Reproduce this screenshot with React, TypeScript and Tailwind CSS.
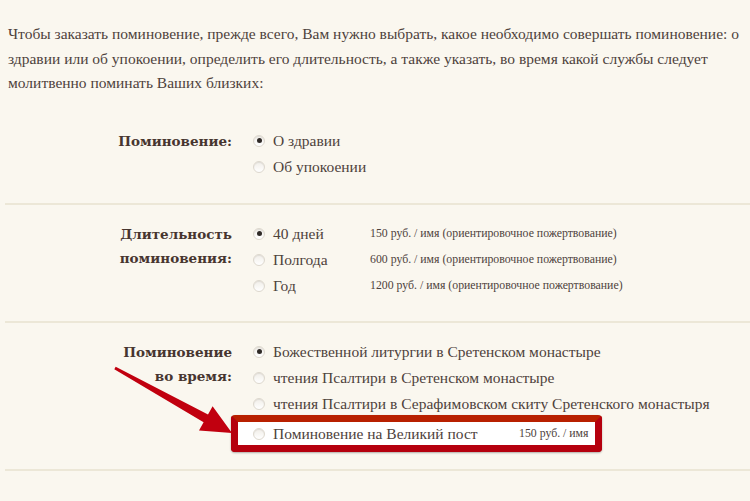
import React from "react";

const serif = "font-['Liberation_Serif','Times_New_Roman',serif]";
const labelFont = "font-['DejaVu_Serif','Liberation_Serif',serif]";

function Radio({ checked }: { checked?: boolean }) {
  return (
    <span className="flex h-[12px] w-[12px] shrink-0 items-center justify-center rounded-full border border-[#ddd8ce] bg-gradient-to-b from-[#f1eee8] to-white shadow-[inset_0_1px_1px_rgba(0,0,0,0.08)]">
      {checked && <span className="h-[5px] w-[5px] rounded-full bg-[#2f2a27]" />}
    </span>
  );
}

function Option({ label, checked, price, nameWidth }: { label: string; checked?: boolean; price?: string; nameWidth?: string }) {
  return (
    <div className="flex h-[26px] items-center">
      <div className={`flex items-center gap-[8px] ${nameWidth ?? ""}`}>
        <Radio checked={checked} />
        <span className="text-[15.5px] text-[#4e423c]">{label}</span>
      </div>
      {price && <span className="text-[11.8px] text-[#4e423c]">{price}</span>}
    </div>
  );
}

function Section({ label, children, top }: { label: React.ReactNode; children: React.ReactNode; top?: boolean }) {
  return (
    <div>
      {!top && <div className="ml-[5px] h-[2px] bg-[#ece7d7]" />}
      <div className={`grid grid-cols-[232px_1fr] gap-x-[21px] ${top ? "pt-[32px] pb-[23px]" : "pt-[16px] pb-[22px]"}`}>
        <div className={`pt-[1px] text-right text-[13.5px] font-bold leading-[24px] text-[#47352f] ${labelFont}`}>
          {label}
        </div>
        <div>{children}</div>
      </div>
    </div>
  );
}

export default function App() {
  return (
    <div className={`relative h-[501px] w-[750px] overflow-hidden bg-[#faf7ef] ${serif}`}>
      <p className="pl-2 pr-[2px] pt-[22px] text-[15.5px] leading-[24.5px] text-[#4e423c]">
        Чтобы заказать поминовение, прежде всего, Вам нужно выбрать, какое необходимо совершать поминовение: о
        здравии или об упокоении, определить его длительность, а также указать, во время какой службы следует
        молитвенно поминать Ваших близких:
      </p>

      <Section top label="Поминовение:">
        <Option checked label="О здравии" />
        <Option label="Об упокоении" />
      </Section>

      <Section
        label={
          <>
            Длительность
            <br />
            поминовения:
          </>
        }
      >
        <Option checked nameWidth="w-[117px]" label="40 дней" price="150 руб. / имя (ориентировочное пожертвование)" />
        <Option nameWidth="w-[117px]" label="Полгода" price="600 руб. / имя (ориентировочное пожертвование)" />
        <Option nameWidth="w-[117px]" label="Год" price="1200 руб. / имя (ориентировочное пожертвование)" />
      </Section>

      <Section
        label={
          <>
            Поминовение
            <br />
            во время:
          </>
        }
      >
        <Option checked label="Божественной литургии в Сретенском монастыре" />
        <Option label="чтения Псалтири в Сретенском монастыре" />
        <Option label="чтения Псалтири в Серафимовском скиту Сретенского монастыря" />
        <div className="relative mt-[4px]">
          <span className="absolute left-[-22px] top-[-6px] h-[37px] w-[371px] rounded-[4px] border-[7px] border-[#b5000e] border-t-[#b82000] bg-white shadow-[0_1px_2px_rgba(0,0,0,0.3)]" />
          <div className="relative flex h-[26px] items-center">
            <div className="flex w-[266px] items-center gap-[8px]">
              <Radio />
              <span className="text-[15.5px] text-[#4e423c]">Поминовение на Великий пост</span>
            </div>
            <span className="text-[11.8px] text-[#4e423c]">150 руб. / имя</span>
          </div>
        </div>
      </Section>

      <div className="ml-[5px] h-[2px] bg-[#ece7d7]" />

      <svg className="pointer-events-none absolute left-0 top-0" width="750" height="501" viewBox="0 0 750 501">
        <polygon
          points="115.7,366.7 208,414.5 212.6,406.2 232,433 199,430.6 203.6,422.3 114.3,369.3"
          fill="#c1000f"
        />
      </svg>
    </div>
  );
}
